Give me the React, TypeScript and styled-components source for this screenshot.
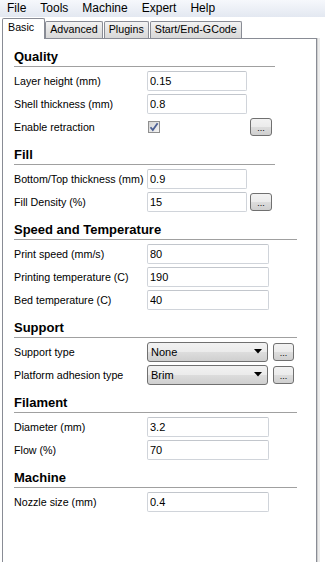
import styled, { createGlobalStyle } from 'styled-components';

const GlobalStyle = createGlobalStyle`
  html, body {
    margin: 0;
    padding: 0;
    background: #ffffff;
    overflow: hidden;
  }
  body {
    font-family: 'Liberation Sans', Arial, sans-serif;
    font-size: 10.7px;
    color: #000000;
  }
`;

const Window = styled.div`
  width: 325px;
  height: 562px;
  display: flex;
  flex-direction: column;
  overflow: hidden;
`;

const MenuBar = styled.div`
  height: 17px;
  display: flex;
  align-items: center;
  background: linear-gradient(#f6f8fc, #e3e8f1);
  font-size: 12px;
`;

const MenuItem = styled.span`
  padding: 0 7px;
  line-height: 17px;
`;

const TabBar = styled.div`
  height: 22px;
  display: flex;
  align-items: flex-end;
  padding-left: 2px;
`;

const Tab = styled.div<{ $active?: boolean }>`
  box-sizing: border-box;
  position: relative;
  z-index: ${(p) => (p.$active ? 1 : 0)};
  height: ${(p) => (p.$active ? 21 : 17)}px;
  margin-bottom: ${(p) => (p.$active ? -1 : 0)}px;
  margin-right: ${(p) => (p.$active ? 0 : 1)}px;
  padding: ${(p) => (p.$active ? '1px 10px 0 5px' : '0 4px')};
  border: 1px solid #898c95;
  border-bottom: none;
  border-radius: 2px 2px 0 0;
  background: ${(p) => (p.$active ? '#ffffff' : 'linear-gradient(#f3f3f3, #e4e4e4 50%, #d8d8d8)')};
  line-height: 15px;
  white-space: nowrap;
`;

const Panel = styled.div`
  box-sizing: border-box;
  width: 315px;
  height: 560px;
  margin-left: 2px;
  padding-left: 11px;
  border: 1px solid #898c95;
  border-bottom: none;
  background: #ffffff;
  box-shadow: 1px 0 0 #cfcfcf, 3px 0 0 #ececec;
`;

const Section = styled.section<{ $width: number }>`
  width: ${(p) => p.$width}px;
  margin-top: 10px;
  display: flex;
  flex-direction: column;
  gap: 3px;
`;

const Heading = styled.h3`
  margin: 0 0 1px;
  padding-bottom: 1px;
  font-size: 13px;
  font-weight: bold;
  line-height: 16px;
  border-bottom: 1px solid #a0a0a0;
`;

const Row = styled.div`
  height: 20px;
  display: grid;
  grid-template-columns: 133px auto auto;
  justify-content: start;
  align-items: center;
`;

const Label = styled.span`
  white-space: nowrap;
  line-height: 20px;
`;

const TextInput = styled.input<{ $width: number }>`
  box-sizing: border-box;
  width: ${(p) => p.$width}px;
  height: 20px;
  margin: 0;
  padding: 0 2px;
  border: 1px solid #d0d4da;
  border-top-color: #c2c6cc;
  border-radius: 2px;
  font: inherit;
  font-size: 11px;
  color: #000000;
  background: #ffffff;
  outline: none;
`;

const CheckCell = styled.div<{ $width: number }>`
  width: ${(p) => p.$width}px;
  display: flex;
  align-items: center;
  padding-left: 1px;
  box-sizing: border-box;
`;

const CheckBox = styled.span`
  box-sizing: border-box;
  width: 12px;
  height: 12px;
  border: 1px solid #8f8f8f;
  background: linear-gradient(135deg, #d4d4d4, #f4f4f4);
  display: flex;
  align-items: center;
  justify-content: center;
`;

const DotsButton = styled.button<{ $width?: number; $offset?: number }>`
  box-sizing: border-box;
  width: ${(p) => p.$width ?? 22}px;
  height: 18px;
  margin: 0 0 0 ${(p) => p.$offset ?? 3}px;
  padding: 3px 0 0;
  border: 1px solid #707070;
  border-radius: 3px;
  background: linear-gradient(#f2f2f2, #ebebeb 50%, #dddddd 50%, #cfcfcf);
  font-family: 'Liberation Sans', Arial, sans-serif;
  font-size: 9px;
  line-height: 10px;
  color: #000000;
`;

const Dropdown = styled.div`
  box-sizing: border-box;
  width: 121px;
  height: 20px;
  padding: 0 5px 0 3px;
  border: 1px solid #707070;
  border-radius: 3px;
  background: linear-gradient(#f2f2f2, #ebebeb 50%, #dddddd 50%, #cfcfcf);
  display: flex;
  align-items: center;
  justify-content: space-between;
  font-size: 11px;
`;

const Check = () => (
  <svg width="10" height="10" viewBox="0 0 10 10">
    <path d="M1.5 5.2 L3.8 8 L8.6 1.2" fill="none" stroke="#4b5f94" strokeWidth="1.8" />
  </svg>
);

const Arrow = () => (
  <svg width="8" height="5" viewBox="0 0 8 5">
    <path d="M0 0 H8 L4 4.5 Z" fill="#000000" />
  </svg>
);

type Field = { label: string; value: string };

const Fields = ({ items, width }: { items: Field[]; width: number }) => (
  <>
    {items.map((f) => (
      <Row key={f.label}>
        <Label>{f.label}</Label>
        <TextInput $width={width} defaultValue={f.value} readOnly />
      </Row>
    ))}
  </>
);

const App = () => {
  return (
    <Window>
      <GlobalStyle />
      <MenuBar>
        <MenuItem>File</MenuItem>
        <MenuItem>Tools</MenuItem>
        <MenuItem>Machine</MenuItem>
        <MenuItem>Expert</MenuItem>
        <MenuItem>Help</MenuItem>
      </MenuBar>
      <TabBar>
        <Tab $active>Basic</Tab>
        <Tab>Advanced</Tab>
        <Tab>Plugins</Tab>
        <Tab>Start/End-GCode</Tab>
      </TabBar>
      <Panel>
        <Section $width={261}>
          <Heading>Quality</Heading>
          <Fields
            width={100}
            items={[
              { label: 'Layer height (mm)', value: '0.15' },
              { label: 'Shell thickness (mm)', value: '0.8' },
            ]}
          />
          <Row>
            <Label>Enable retraction</Label>
            <CheckCell $width={100}>
              <CheckBox>
                <Check />
              </CheckBox>
            </CheckCell>
            <DotsButton>...</DotsButton>
          </Row>
        </Section>

        <Section $width={261}>
          <Heading>Fill</Heading>
          <Fields width={100} items={[{ label: 'Bottom/Top thickness (mm)', value: '0.9' }]} />
          <Row>
            <Label>Fill Density (%)</Label>
            <TextInput $width={100} defaultValue="15" readOnly />
            <DotsButton>...</DotsButton>
          </Row>
        </Section>

        <Section $width={283}>
          <Heading>Speed and Temperature</Heading>
          <Fields
            width={122}
            items={[
              { label: 'Print speed (mm/s)', value: '80' },
              { label: 'Printing temperature (C)', value: '190' },
              { label: 'Bed temperature (C)', value: '40' },
            ]}
          />
        </Section>

        <Section $width={283}>
          <Heading>Support</Heading>
          <Row>
            <Label>Support type</Label>
            <Dropdown>
              <span>None</span>
              <Arrow />
            </Dropdown>
            <DotsButton $width={21} $offset={5}>...</DotsButton>
          </Row>
          <Row>
            <Label>Platform adhesion type</Label>
            <Dropdown>
              <span>Brim</span>
              <Arrow />
            </Dropdown>
            <DotsButton $width={21} $offset={5}>...</DotsButton>
          </Row>
        </Section>

        <Section $width={283}>
          <Heading>Filament</Heading>
          <Fields
            width={122}
            items={[
              { label: 'Diameter (mm)', value: '3.2' },
              { label: 'Flow (%)', value: '70' },
            ]}
          />
        </Section>

        <Section $width={283}>
          <Heading>Machine</Heading>
          <Fields width={122} items={[{ label: 'Nozzle size (mm)', value: '0.4' }]} />
        </Section>
      </Panel>
    </Window>
  );
};

export default App;
